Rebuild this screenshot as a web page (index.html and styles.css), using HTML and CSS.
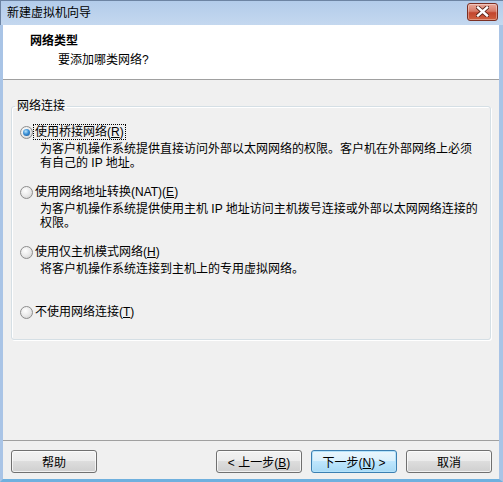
FILE: index.html
```html
<!DOCTYPE html>
<html lang="zh-CN">
<head>
  <meta charset="UTF-8">
  <title>新建虚拟机向导</title>
  <link rel="stylesheet" href="styles.css">
</head>
<body>
  <div class="window">
    <div class="titlebar">
      <span class="title">新建虚拟机向导</span>
      <button class="close">
        <svg width="13" height="11" viewBox="0 0 13 11">
          <path d="M2 1.5 L11 9.5 M11 1.5 L2 9.5" stroke="#5a2418" stroke-width="4.2" stroke-linecap="square" fill="none"/>
          <path d="M2 1.5 L11 9.5 M11 1.5 L2 9.5" stroke="#ffffff" stroke-width="2.4" stroke-linecap="square" fill="none"/>
        </svg>
      </button>
    </div>

    <header class="page-head">
      <div class="page-title">网络类型</div>
      <div class="page-sub">要添加哪类网络?</div>
    </header>

    <main class="page-body">
      <fieldset class="group">
        <legend>网络连接</legend>

        <div class="option">
          <div class="option-row">
            <span class="radio checked"></span>
            <span class="label focused">使用桥接网络(<u>R</u>)</span>
          </div>
          <div class="desc">为客户机操作系统提供直接访问外部以太网网络的权限。客户机在外部网络上必须<br>有自己的 IP 地址。</div>
        </div>

        <div class="option">
          <div class="option-row">
            <span class="radio"></span>
            <span class="label">使用网络地址转换(NAT)(<u>E</u>)</span>
          </div>
          <div class="desc">为客户机操作系统提供使用主机 IP 地址访问主机拨号连接或外部以太网网络连接的<br>权限。</div>
        </div>

        <div class="option">
          <div class="option-row">
            <span class="radio"></span>
            <span class="label">使用仅主机模式网络(<u>H</u>)</span>
          </div>
          <div class="desc">将客户机操作系统连接到主机上的专用虚拟网络。</div>
        </div>

        <div class="option">
          <div class="option-row">
            <span class="radio"></span>
            <span class="label">不使用网络连接(<u>T</u>)</span>
          </div>
        </div>
      </fieldset>
    </main>

    <footer class="page-foot">
      <button class="btn">帮助</button>
      <span class="spacer"></span>
      <button class="btn">&lt; 上一步(<u>B</u>)</button>
      <button class="btn default">下一步(<u>N</u>) &gt;</button>
      <button class="btn">取消</button>
    </footer>
  </div>
</body>
</html>
```

FILE: styles.css
```css
html, body {
  margin: 0;
  padding: 0;
}
body {
  width: 503px;
  height: 482px;
  font-family: "Liberation Sans", "Noto Sans CJK SC", sans-serif;
  font-size: 12px;
  color: #000;
}

.window {
  display: flex;
  flex-direction: column;
  width: 503px;
  height: 482px;
  box-sizing: border-box;
  border-left: 3px solid #a9c4e6;
  border-right: 4px solid #a9c4e6;
  border-bottom: 3px solid #6fb0de;
  background: #f0f0f0;
}

.titlebar {
  display: flex;
  align-items: center;
  height: 25px;
  flex: none;
  margin-left: -3px;
  margin-right: -4px;
  padding-left: 7px;
  padding-right: 5px;
  background: linear-gradient(to bottom, #b2cbea, #c4d8ef);
  box-shadow: inset 1px 1px 0 #6d84a3;
}
.title {
  flex: 1;
  line-height: 16px;
  margin-top: 1px;
}
.close {
  display: flex;
  justify-content: center;
  align-items: center;
  width: 31px;
  height: 18px;
  margin-top: -2px;
  padding: 0;
  border: 1px solid #7b2f23;
  border-radius: 3px;
  background: linear-gradient(to bottom, #e9a99b 0%, #d77b68 45%, #c3452d 55%, #d0613f 100%);
  box-shadow: inset 0 0 0 1px rgba(255, 255, 255, 0.35);
}

.page-head {
  flex: none;
  height: 55px;
  box-sizing: border-box;
  padding: 8px 0 0 27px;
  background: #fff;
  border-bottom: 1px solid #a0a0a0;
}
.page-title {
  font-weight: bold;
  line-height: 16px;
}
.page-sub {
  margin: 3px 0 0 28px;
  line-height: 16px;
}

.page-body {
  flex: 1;
  padding: 18px 8px 0 8px;
}

.group {
  margin: 0;
  padding: 10px 8px 19px 3px;
  border: 1px solid #d5dfe5;
  border-radius: 3px;
  box-shadow: inset 1px 1px 0 #fff, 1px 1px 0 #fff;
}
.group legend {
  padding: 0 2px;
  line-height: 16px;
}

.option {
  margin-left: 5px;
  margin-bottom: 14px;
}
.option:last-child {
  margin-bottom: 0;
}
.option-row {
  display: flex;
  align-items: center;
  height: 16px;
}
.radio {
  position: relative;
  width: 11px;
  height: 11px;
  border: 1px solid #8d8d8d;
  border-radius: 50%;
  background: radial-gradient(circle at 40% 35%, #ffffff 0%, #eaeaea 50%, #c9c9c9 100%);
}
.radio.checked::after {
  content: "";
  position: absolute;
  left: 2px;
  top: 2px;
  width: 7px;
  height: 7px;
  border-radius: 50%;
  background: radial-gradient(circle at 40% 35%, #b9e4fb 0%, #3a8fd5 45%, #174f8c 100%);
}
.label {
  padding: 0 1px;
  line-height: 14px;
  border: 1px dotted transparent;
}
.label.focused {
  border-color: #000;
}

.desc {
  min-height: 28px;
  margin-top: 2px;
  padding-left: 20px;
  line-height: 14px;
}

.page-foot {
  flex: none;
  display: flex;
  align-items: flex-start;
  gap: 9px;
  height: 39px;
  box-sizing: border-box;
  padding: 9px 7px 0 8px;
  border-top: 1px solid #a0a0a0;
}
.spacer {
  flex: 1;
}
.btn {
  width: 86px;
  height: 23px;
  padding: 0;
  font: inherit;
  color: #000;
  border: 1px solid #707070;
  border-radius: 3px;
  background: linear-gradient(to bottom, #f2f2f2 0%, #ebebeb 50%, #dddddd 50%, #cfcfcf 100%);
  box-shadow: inset 0 0 0 1px rgba(255, 255, 255, 0.7);
}
.btn.default {
  border-color: #3c7fb1;
  background: linear-gradient(to bottom, #eaf6fd 0%, #d9f0fc 50%, #bee6fd 50%, #a7d9f5 100%);
  box-shadow: inset 0 0 0 1px #b5e3fb;
}
```
